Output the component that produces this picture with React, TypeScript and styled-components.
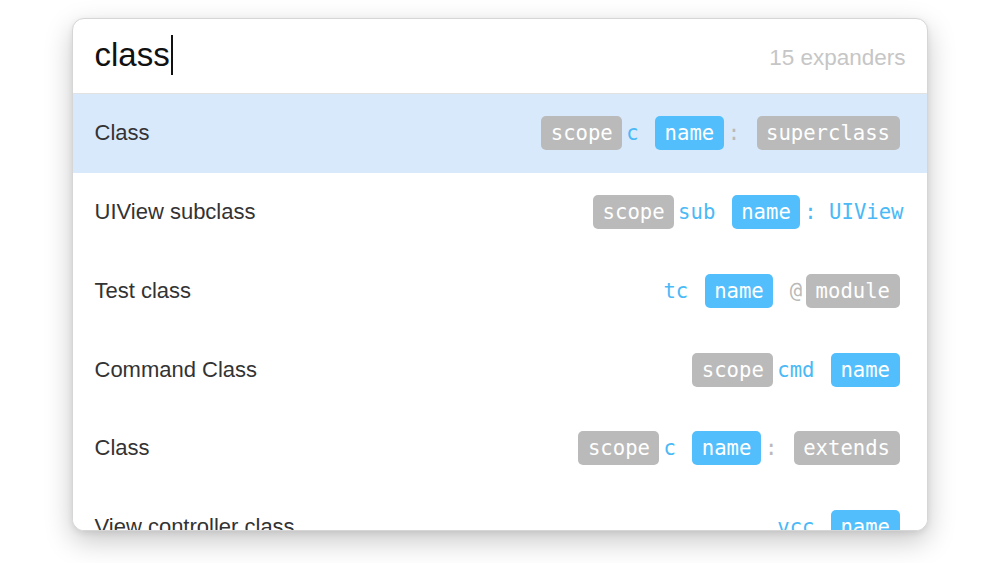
import styled, { createGlobalStyle } from 'styled-components';

const GlobalStyle = createGlobalStyle`
  html, body {
    margin: 0;
    padding: 0;
    background: #fff;
  }
  body {
    font-family: 'Liberation Sans', Arial, sans-serif;
  }
`;

const Page = styled.div`
  width: 1000px;
  height: 563px;
  display: flex;
  justify-content: center;
  padding-top: 18px;
  padding-right: 1px;
  box-sizing: border-box;
  overflow: hidden;
`;

const Panel = styled.div`
  width: 856px;
  height: 513px;
  background: #fff;
  border-radius: 12px;
  border: 1px solid #d6d6d6;
  box-sizing: border-box;
  box-shadow: 0 10px 28px rgba(0, 0, 0, 0.22), 0 2px 6px rgba(0, 0, 0, 0.08);
  overflow: hidden;
  display: flex;
  flex-direction: column;
`;

const Header = styled.div`
  height: 74px;
  flex-shrink: 0;
  display: flex;
  align-items: center;
  justify-content: space-between;
  padding: 0 21px 0 22px;
  border-bottom: 1px solid #e2e2e2;
`;

const Query = styled.div`
  display: flex;
  align-items: center;
  font-size: 33px;
  color: #111;
  margin-top: -2px;
`;

const Caret = styled.span`
  display: inline-block;
  width: 2px;
  height: 40px;
  margin-left: 1px;
  background: #111;
`;

const Count = styled.div`
  font-size: 22.5px;
  color: #c6c6c6;
  margin-top: 4px;
`;

const List = styled.div`
  display: flex;
  flex-direction: column;
`;

const Row = styled.div<{ $selected?: boolean }>`
  height: 78.75px;
  flex-shrink: 0;
  display: flex;
  align-items: center;
  justify-content: space-between;
  padding: 0 27px 0 22px;
  background: ${(p) => (p.$selected ? '#d9e9fc' : '#fff')};
`;

const Label = styled.div`
  font-size: 22px;
  color: #333;
`;

const Snippet = styled.div`
  display: flex;
  align-items: center;
  gap: 4px;
  font-family: 'DejaVu Sans Mono', 'Liberation Mono', monospace;
  font-size: 20.6px;
  white-space: pre;
`;

const Pill = styled.span<{ $tone: 'gray' | 'blue' }>`
  display: inline-flex;
  align-items: center;
  height: 34px;
  padding: 0 9.5px;
  border-radius: 5px;
  color: #fff;
  background: ${(p) => (p.$tone === 'blue' ? '#52bffc' : '#bababa')};
`;

const Literal = styled.span<{ $tone: 'gray' | 'blue' }>`
  color: ${(p) => (p.$tone === 'blue' ? '#4ab9f6' : '#b9b9b9')};

  &:last-child {
    margin-right: -4px;
  }
`;

type Token = { kind: 'pill' | 'lit'; tone: 'gray' | 'blue'; text: string };

const scope: Token = { kind: 'pill', tone: 'gray', text: 'scope' };
const name: Token = { kind: 'pill', tone: 'blue', text: 'name' };
const lit = (text: string, tone: 'gray' | 'blue' = 'blue'): Token => ({ kind: 'lit', tone, text });
const gray = (text: string): Token => ({ kind: 'pill', tone: 'gray', text });

const expanders: { label: string; tokens: Token[] }[] = [
  { label: 'Class', tokens: [scope, lit('c '), name, lit(': ', 'gray'), gray('superclass')] },
  { label: 'UIView subclass', tokens: [scope, lit('sub '), name, lit(': UIView')] },
  { label: 'Test class', tokens: [lit('tc '), name, lit(' @', 'gray'), gray('module')] },
  { label: 'Command Class', tokens: [scope, lit('cmd '), name] },
  { label: 'Class', tokens: [scope, lit('c '), name, lit(': ', 'gray'), gray('extends')] },
  { label: 'View controller class', tokens: [lit('vcc '), name] },
];

export default function App() {
  return (
    <>
      <GlobalStyle />
      <Page>
        <Panel>
          <Header>
            <Query>
              class
              <Caret />
            </Query>
            <Count>15 expanders</Count>
          </Header>
          <List>
            {expanders.map((e, i) => (
              <Row key={i} $selected={i === 0}>
                <Label>{e.label}</Label>
                <Snippet>
                  {e.tokens.map((t, j) =>
                    t.kind === 'pill' ? (
                      <Pill key={j} $tone={t.tone}>
                        {t.text}
                      </Pill>
                    ) : (
                      <Literal key={j} $tone={t.tone}>
                        {t.text}
                      </Literal>
                    )
                  )}
                </Snippet>
              </Row>
            ))}
          </List>
        </Panel>
      </Page>
    </>
  );
}
